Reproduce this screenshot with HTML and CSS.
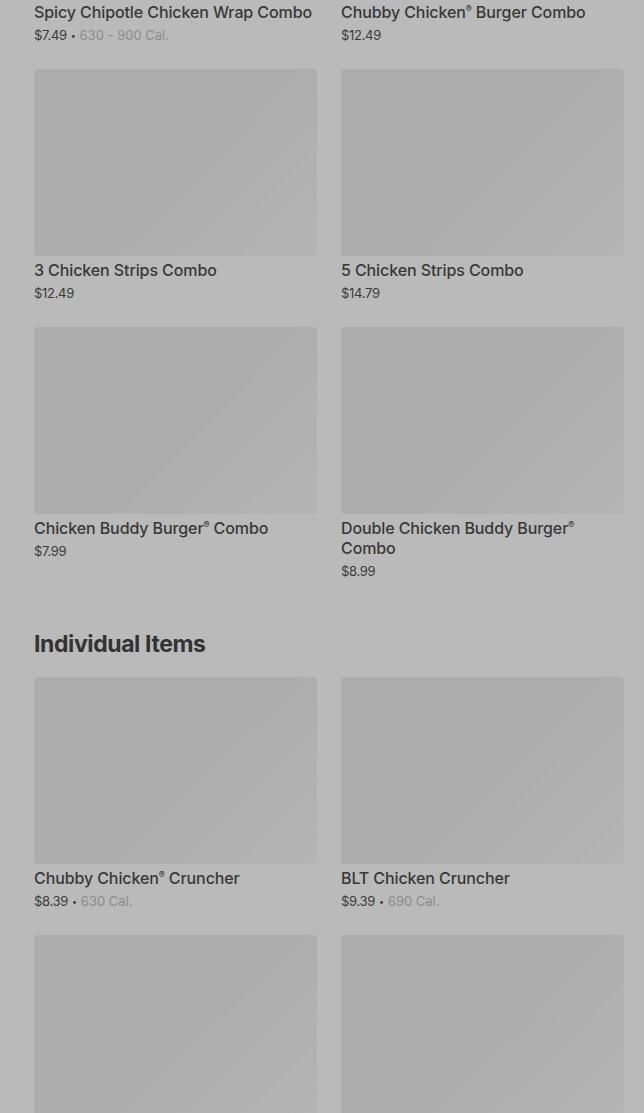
FILE: index.html
```html
<!DOCTYPE html>
<html lang="en">
<head>
<meta charset="UTF-8">
<meta name="viewport" content="width=device-width, initial-scale=1.0">
<title>Menu</title>
<link rel="stylesheet" href="styles.css">
</head>
<body>
<div class="menu">
    <section class="category first">
        <div class="item-grid">
            <div class="item">
                <div class="item-image"></div>
                <div class="item-name">Spicy Chipotle Chicken Wrap Combo</div>
                <div class="item-meta"><span class="price">$7.49</span><span class="dot">&bull;</span><span class="cal">630 - 900 Cal.</span></div>
            </div>
            <div class="item">
                <div class="item-image"></div>
                <div class="item-name">Chubby Chicken<sup>&reg;</sup> Burger Combo</div>
                <div class="item-meta"><span class="price">$12.49</span></div>
            </div>
            <div class="item">
                <div class="item-image"></div>
                <div class="item-name">3 Chicken Strips Combo</div>
                <div class="item-meta"><span class="price">$12.49</span></div>
            </div>
            <div class="item">
                <div class="item-image"></div>
                <div class="item-name">5 Chicken Strips Combo</div>
                <div class="item-meta"><span class="price">$14.79</span></div>
            </div>
            <div class="item">
                <div class="item-image"></div>
                <div class="item-name">Chicken Buddy Burger<sup>&reg;</sup> Combo</div>
                <div class="item-meta"><span class="price">$7.99</span></div>
            </div>
            <div class="item">
                <div class="item-image"></div>
                <div class="item-name">Double Chicken Buddy Burger<sup>&reg;</sup> Combo</div>
                <div class="item-meta"><span class="price">$8.99</span></div>
            </div>
        </div>
    </section>

    <section class="category">
        <h2>Individual Items</h2>
        <div class="item-grid">
            <div class="item">
                <div class="item-image"></div>
                <div class="item-name">Chubby Chicken<sup>&reg;</sup> Cruncher</div>
                <div class="item-meta"><span class="price">$8.39</span><span class="dot">&bull;</span><span class="cal">630 Cal.</span></div>
            </div>
            <div class="item">
                <div class="item-image"></div>
                <div class="item-name">BLT Chicken Cruncher</div>
                <div class="item-meta"><span class="price">$9.39</span><span class="dot">&bull;</span><span class="cal">690 Cal.</span></div>
            </div>
            <div class="item">
                <div class="item-image"></div>
                <div class="item-name">Chicken Cruncher</div>
                <div class="item-meta"><span class="price">$7.39</span></div>
            </div>
            <div class="item">
                <div class="item-image"></div>
                <div class="item-name">Spicy Chicken Cruncher</div>
                <div class="item-meta"><span class="price">$7.39</span></div>
            </div>
        </div>
    </section>
</div>
</body>
</html>
```

FILE: styles.css
```css
body {
    margin: 0;
    padding: 0;
    background-color: #bababa;
    font-family: Inter, "Liberation Sans", sans-serif;
    color: #363636;
    overflow: hidden;
}
.menu {
    padding: 0 20px 0 34px;
}
.category.first {
    margin-top: -189px;
}
.category h2 {
    margin: 47px 0 17px;
    font-size: 23px;
    line-height: 32px;
    font-weight: 700;
    letter-spacing: -0.4px;
    color: #333;
}
.item-grid {
    display: grid;
    grid-template-columns: 1fr 1fr;
    column-gap: 24px;
    row-gap: 24px;
}
.item-image {
    height: 187px;
    border-radius: 3px;
    background: linear-gradient(135deg, #adadad 0%, #adadad 55%, #b4b4b4 100%);
}
.item-name {
    margin-top: 4px;
    font-size: 16px;
    line-height: 20px;
    font-weight: 500;
    letter-spacing: -0.1px;
    color: #383838;
}
.item-name sup {
    font-size: 9px;
    line-height: 0;
    vertical-align: 6px;
}
.item-meta {
    margin-top: 4px;
    font-size: 13px;
    line-height: 19px;
    letter-spacing: -0.3px;
}
.price {
    color: #3a3a3a;
}
.dot {
    margin: 0 4px;
    font-size: 9px;
    color: #3a3a3a;
    vertical-align: 1px;
}
.cal {
    color: #8c8c8c;
    letter-spacing: 0;
}
```
